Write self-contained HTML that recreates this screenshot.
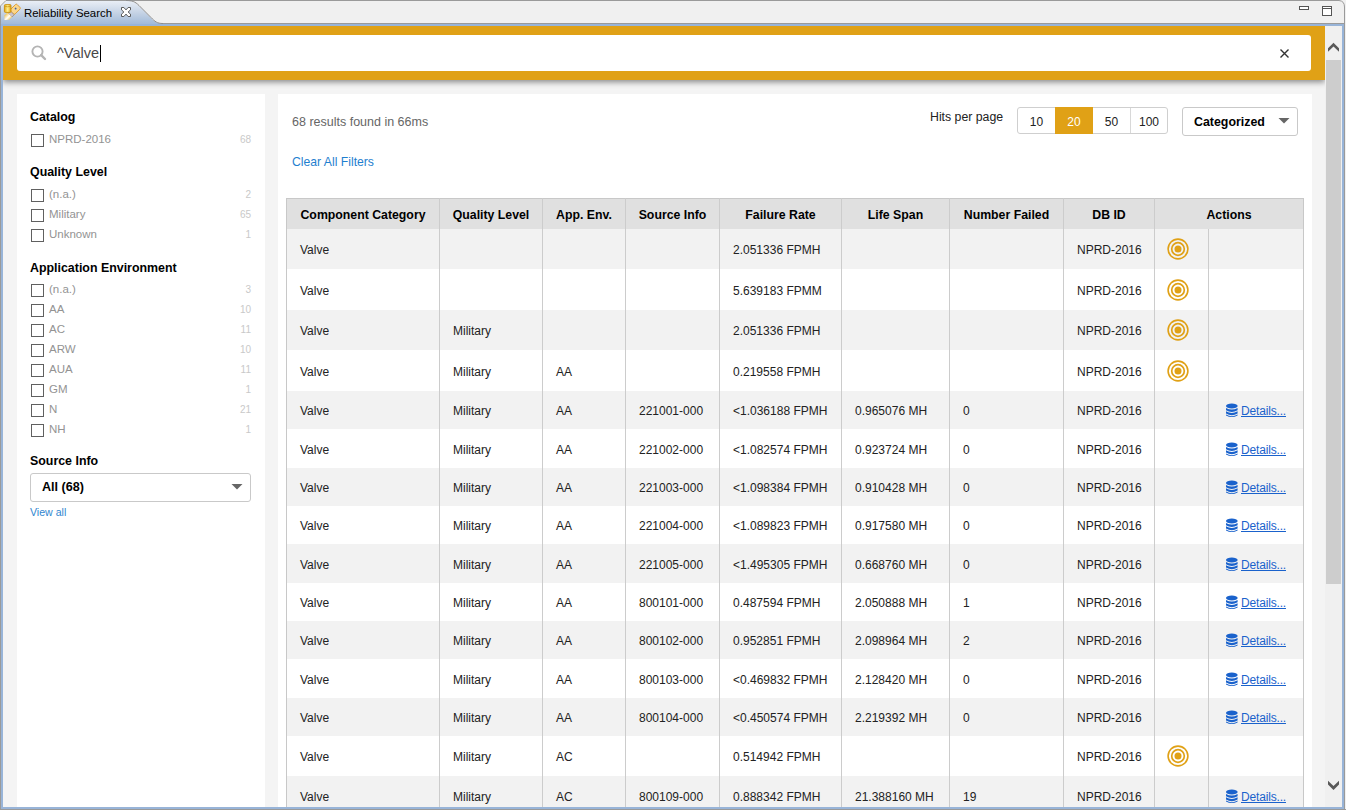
<!DOCTYPE html>
<html><head><meta charset="utf-8"><title>Reliability Search</title>
<style>
html,body{margin:0;padding:0;width:1346px;height:810px;overflow:hidden;background:#f0f0f0;}
body{position:relative;font-family:"Liberation Sans", sans-serif;}
.r{position:absolute;}
.t{position:absolute;white-space:nowrap;}
</style></head><body>
<div class="r" style="left:0px;top:0px;width:1346px;height:810px;background:#f0f0f0;"></div>
<svg class="r" style="left:0;top:0" width="1346" height="27" viewBox="0 0 1346 27">
<defs><linearGradient id="tg" x1="0" y1="0" x2="0" y2="1">
<stop offset="0" stop-color="#e9eef6"/><stop offset="0.5" stop-color="#c3d1e4"/><stop offset="1" stop-color="#9bb6d7"/></linearGradient></defs>
<rect x="0" y="0" width="1346" height="27" fill="#f0f0f0"/>
<path d="M0.5,26 L0.5,6 L6,0.5 L1339,0.5 Q1344.5,1 1344.5,7 L1344.5,27" fill="none" stroke="#9a9a9a" stroke-width="1"/>
<path d="M1345.5,27 L1345.5,0" stroke="#f0f0f0" stroke-width="1"/>
<path d="M162,23.5 L1344.5,23.5" stroke="#9a9a9a" stroke-width="1"/>
<path d="M1,26 L1,6.5 L6.5,1 L127,1 C132,1 135,2 139,6 L151,18 C155,22 157,23.5 163,23.5 L163,24 L1,24 Z" fill="url(#tg)"/>
<path d="M126,0.5 C132,0.5 135,1.5 139,5.5 L151,17.5 C155,21.5 157,23.5 163,23.5" fill="none" stroke="#8d8d8d" stroke-width="1"/>
<rect x="1" y="24" width="1343" height="2" fill="#98b4d8"/>
</svg>
<svg class="r" style="left:0;top:0" width="24" height="24" viewBox="0 0 24 24">
<defs>
<linearGradient id="cyl" x1="0" y1="0" x2="1" y2="0"><stop offset="0" stop-color="#e3a814"/><stop offset="0.5" stop-color="#fff08a"/><stop offset="1" stop-color="#e0a010"/></linearGradient>
<linearGradient id="tip" x1="0" y1="0" x2="0" y2="1"><stop offset="0" stop-color="#f5c85a"/><stop offset="0.6" stop-color="#ffffff"/><stop offset="1" stop-color="#f3cf6a"/></linearGradient>
</defs>
<g transform="translate(12.3 12.2) rotate(-45)">
<rect x="-0.5" y="-3.2" width="9.3" height="6.4" rx="1.3" fill="#fbd68a" stroke="#db9a2e" stroke-width="0.9"/>
<circle cx="4.9" cy="-0.2" r="0.95" fill="#3d62a6"/>
<rect x="-3.6" y="-3.2" width="3.1" height="6.4" fill="#cbc3cb" stroke="#9a8060" stroke-width="0.6"/>
<path d="M-3.6,-3.2 L-7.6,-3.2 L-11.2,0 L-7.6,3.2 L-3.6,3.2 Z" fill="url(#tip)"/>
</g>
<rect x="4.4" y="4.6" width="6.6" height="7.8" rx="1" fill="url(#cyl)" stroke="#c98f0c" stroke-width="0.9"/>
<path d="M4.6,6.2 Q7.7,7.4 10.8,6.2" fill="none" stroke="#c98f0c" stroke-width="0.7"/>
</svg>
<div class="t" style="left:24px;top:5.75px;font-size:11.4px;line-height:15px;color:#000;">Reliability Search</div>
<svg class="r" style="left:121px;top:7px" width="10" height="10" viewBox="0 0 10 10">
<path d="M0.5,0.5 H2.9 L5,2.9 L7.1,0.5 H9.5 V2.9 L7.1,5 L9.5,7.1 V9.5 H7.1 L5,7.1 L2.9,9.5 H0.5 V7.1 L2.9,5 L0.5,2.9 Z" fill="#fff" stroke="#5a5a5a" stroke-width="1" stroke-linejoin="miter"/>
</svg>
<svg class="r" style="left:1296px;top:3px" width="40" height="16" viewBox="0 0 40 16">
<rect x="3.5" y="3.5" width="9" height="3" fill="#fff" stroke="#555" stroke-width="1"/>
<rect x="26.5" y="3.5" width="9" height="9" fill="#fff" stroke="#555" stroke-width="1"/>
<path d="M26.5,5.5 L35.5,5.5" stroke="#555" stroke-width="1"/>
</svg>
<div class="r" style="left:3px;top:26px;width:1339px;height:781px;background:#f4f4f4;"></div>
<div class="r" style="left:17px;top:94px;width:248px;height:713px;background:#ffffff;"></div>
<div class="r" style="left:278px;top:94px;width:1034px;height:713px;background:#ffffff;"></div>
<div class="r" style="left:1325px;top:26px;width:17px;height:781px;background:#f0f0f0;"></div>
<div class="r" style="left:1326px;top:60px;width:15px;height:524px;background:#cdcdcd;"></div>
<svg class="r" style="left:1325px;top:26px" width="17" height="781" viewBox="0 0 17 781">
<path d="M3,22.3 L8.5,16.8 L14,22.3 L14,25.8 L8.5,20.6 L3,25.8 Z" fill="#595959"/>
<path d="M3,754.7 L8.5,760.1 L14,754.7 L14,758.6 L8.5,763.9 L3,758.6 Z" fill="#595959"/>
</svg>
<div class="r" style="left:3px;top:26px;width:1322px;height:781px;overflow:hidden"><div class="r" style="left:0;top:0;width:1322px;height:54px;background:#e0a116;box-shadow:0 2px 6px rgba(0,0,0,0.46);"></div></div>
<div class="r" style="left:17px;top:35px;width:1294px;height:36px;background:#ffffff;border-radius:3px;"></div>
<svg class="r" style="left:28px;top:42px" width="22" height="22" viewBox="0 0 22 22">
<circle cx="9.5" cy="9.5" r="5.1" fill="none" stroke="#b4b4b4" stroke-width="1.9"/>
<path d="M13.2,13.2 L17,17" stroke="#b4b4b4" stroke-width="2.4" stroke-linecap="round"/>
</svg>
<div class="t" style="left:57px;top:43.98px;font-size:14.5px;line-height:19px;color:#484848;">^Valve</div>
<div class="r" style="left:100px;top:45px;width:1px;height:17px;background:#000;"></div>
<svg class="r" style="left:1276px;top:45px" width="17" height="17" viewBox="0 0 17 17">
<path d="M4.5,4.5 L12.5,12.5 M12.5,4.5 L4.5,12.5" stroke="#333" stroke-width="1.4"/>
</svg>
<div class="t" style="left:30px;top:108.70px;font-size:12.4px;line-height:16px;color:#000;font-weight:bold;">Catalog</div>
<div class="r" style="left:31px;top:134px;width:13px;height:13px;background:#fff;box-sizing:border-box;border:1px solid #606060;"></div>
<div class="t" style="left:49px;top:132.12px;font-size:11.5px;line-height:15px;color:#939393;">NPRD-2016</div>
<div class="t" style="right:1095px;top:133.03px;font-size:10px;line-height:13px;color:#c9c9c9;">68</div>
<div class="t" style="left:30px;top:163.70px;font-size:12.4px;line-height:16px;color:#000;font-weight:bold;">Quality Level</div>
<div class="r" style="left:31px;top:189px;width:13px;height:13px;background:#fff;box-sizing:border-box;border:1px solid #606060;"></div>
<div class="t" style="left:49px;top:187.12px;font-size:11.5px;line-height:15px;color:#939393;">(n.a.)</div>
<div class="t" style="right:1095px;top:188.03px;font-size:10px;line-height:13px;color:#c9c9c9;">2</div>
<div class="r" style="left:31px;top:209px;width:13px;height:13px;background:#fff;box-sizing:border-box;border:1px solid #606060;"></div>
<div class="t" style="left:49px;top:207.12px;font-size:11.5px;line-height:15px;color:#939393;">Military</div>
<div class="t" style="right:1095px;top:208.03px;font-size:10px;line-height:13px;color:#c9c9c9;">65</div>
<div class="r" style="left:31px;top:229px;width:13px;height:13px;background:#fff;box-sizing:border-box;border:1px solid #606060;"></div>
<div class="t" style="left:49px;top:227.12px;font-size:11.5px;line-height:15px;color:#939393;">Unknown</div>
<div class="t" style="right:1095px;top:228.03px;font-size:10px;line-height:13px;color:#c9c9c9;">1</div>
<div class="t" style="left:30px;top:259.50px;font-size:12.4px;line-height:16px;color:#000;font-weight:bold;">Application Environment</div>
<div class="r" style="left:31px;top:284px;width:13px;height:13px;background:#fff;box-sizing:border-box;border:1px solid #606060;"></div>
<div class="t" style="left:49px;top:282.12px;font-size:11.5px;line-height:15px;color:#939393;">(n.a.)</div>
<div class="t" style="right:1095px;top:283.04px;font-size:10px;line-height:13px;color:#c9c9c9;">3</div>
<div class="r" style="left:31px;top:304px;width:13px;height:13px;background:#fff;box-sizing:border-box;border:1px solid #606060;"></div>
<div class="t" style="left:49px;top:302.12px;font-size:11.5px;line-height:15px;color:#939393;">AA</div>
<div class="t" style="right:1095px;top:303.04px;font-size:10px;line-height:13px;color:#c9c9c9;">10</div>
<div class="r" style="left:31px;top:324px;width:13px;height:13px;background:#fff;box-sizing:border-box;border:1px solid #606060;"></div>
<div class="t" style="left:49px;top:322.12px;font-size:11.5px;line-height:15px;color:#939393;">AC</div>
<div class="t" style="right:1095px;top:323.04px;font-size:10px;line-height:13px;color:#c9c9c9;">11</div>
<div class="r" style="left:31px;top:344px;width:13px;height:13px;background:#fff;box-sizing:border-box;border:1px solid #606060;"></div>
<div class="t" style="left:49px;top:342.12px;font-size:11.5px;line-height:15px;color:#939393;">ARW</div>
<div class="t" style="right:1095px;top:343.04px;font-size:10px;line-height:13px;color:#c9c9c9;">10</div>
<div class="r" style="left:31px;top:364px;width:13px;height:13px;background:#fff;box-sizing:border-box;border:1px solid #606060;"></div>
<div class="t" style="left:49px;top:362.12px;font-size:11.5px;line-height:15px;color:#939393;">AUA</div>
<div class="t" style="right:1095px;top:363.04px;font-size:10px;line-height:13px;color:#c9c9c9;">11</div>
<div class="r" style="left:31px;top:384px;width:13px;height:13px;background:#fff;box-sizing:border-box;border:1px solid #606060;"></div>
<div class="t" style="left:49px;top:382.12px;font-size:11.5px;line-height:15px;color:#939393;">GM</div>
<div class="t" style="right:1095px;top:383.04px;font-size:10px;line-height:13px;color:#c9c9c9;">1</div>
<div class="r" style="left:31px;top:404px;width:13px;height:13px;background:#fff;box-sizing:border-box;border:1px solid #606060;"></div>
<div class="t" style="left:49px;top:402.12px;font-size:11.5px;line-height:15px;color:#939393;">N</div>
<div class="t" style="right:1095px;top:403.04px;font-size:10px;line-height:13px;color:#c9c9c9;">21</div>
<div class="r" style="left:31px;top:424px;width:13px;height:13px;background:#fff;box-sizing:border-box;border:1px solid #606060;"></div>
<div class="t" style="left:49px;top:422.12px;font-size:11.5px;line-height:15px;color:#939393;">NH</div>
<div class="t" style="right:1095px;top:423.04px;font-size:10px;line-height:13px;color:#c9c9c9;">1</div>
<div class="t" style="left:30px;top:452.90px;font-size:12.4px;line-height:16px;color:#000;font-weight:bold;">Source Info</div>
<div class="r" style="left:30px;top:473px;width:221px;height:29px;background:#fff;box-sizing:border-box;border:1px solid #c9c9c9;border-radius:3px;"></div>
<div class="t" style="left:42px;top:478.63px;font-size:12.6px;line-height:16px;color:#000;font-weight:bold;">All (68)</div>
<svg class="r" style="left:231px;top:483px" width="12" height="8" viewBox="0 0 12 8">
<path d="M0.5,1 L11.5,1 L6,6.5 Z" fill="#666"/></svg>
<div class="t" style="left:30px;top:505.33px;font-size:10.6px;line-height:14px;color:#2f86cf;">View all</div>
<div class="t" style="left:292px;top:113.97px;font-size:12.5px;line-height:16px;color:#666666;">68 results found in 66ms</div>
<div class="t" style="left:292px;top:153.87px;font-size:12.2px;line-height:16px;color:#1f7fcf;">Clear All Filters</div>
<div class="t" style="left:930px;top:108.74px;font-size:12.3px;line-height:16px;color:#222;">Hits per page</div>
<div class="r" style="left:1017px;top:107px;width:151px;height:27px;background:#fff;box-sizing:border-box;border:1px solid #cfcfcf;border-radius:3px;"></div>
<div class="r" style="left:1055px;top:107px;width:38px;height:27px;background:#e0a116;"></div>
<div class="r" style="left:1130px;top:108px;width:1px;height:25px;background:#d8d8d8;"></div>
<div class="t" style="left:1017.5px;width:38px;text-align:center;top:113.54px;font-size:12px;line-height:16px;color:#222;">10</div>
<div class="t" style="left:1055.0px;width:38px;text-align:center;top:113.54px;font-size:12px;line-height:16px;color:#fff;">20</div>
<div class="t" style="left:1092.5px;width:38px;text-align:center;top:113.54px;font-size:12px;line-height:16px;color:#222;">50</div>
<div class="t" style="left:1130.0px;width:38px;text-align:center;top:113.54px;font-size:12px;line-height:16px;color:#222;">100</div>
<div class="r" style="left:1182px;top:107px;width:116px;height:29px;background:#fff;box-sizing:border-box;border:1px solid #c9c9c9;border-radius:3px;"></div>
<div class="t" style="left:1194px;top:113.70px;font-size:12.4px;line-height:16px;color:#000;font-weight:bold;">Categorized</div>
<svg class="r" style="left:1278px;top:117px" width="12" height="8" viewBox="0 0 12 8">
<path d="M0.5,1 L11.5,1 L6,6.5 Z" fill="#666"/></svg>
<div class="r" style="left:0;top:0;width:1346px;height:807px;overflow:hidden">
<div class="r" style="left:286px;top:198px;width:1018px;height:31px;background:#e0e0e0;"></div>
<div class="r" style="left:286px;top:198px;width:1018px;height:1px;background:#c8c8c8;"></div>
<div class="t" style="left:286.5px;width:153px;text-align:center;top:207.14px;font-size:12.3px;line-height:16px;color:#000;font-weight:bold;">Component Category</div>
<div class="t" style="left:439.5px;width:103px;text-align:center;top:207.14px;font-size:12.3px;line-height:16px;color:#000;font-weight:bold;">Quality Level</div>
<div class="t" style="left:542.5px;width:83px;text-align:center;top:207.14px;font-size:12.3px;line-height:16px;color:#000;font-weight:bold;">App. Env.</div>
<div class="t" style="left:625.5px;width:94px;text-align:center;top:207.14px;font-size:12.3px;line-height:16px;color:#000;font-weight:bold;">Source Info</div>
<div class="t" style="left:719.5px;width:122px;text-align:center;top:207.14px;font-size:12.3px;line-height:16px;color:#000;font-weight:bold;">Failure Rate</div>
<div class="t" style="left:841.5px;width:108px;text-align:center;top:207.14px;font-size:12.3px;line-height:16px;color:#000;font-weight:bold;">Life Span</div>
<div class="t" style="left:949.5px;width:114px;text-align:center;top:207.14px;font-size:12.3px;line-height:16px;color:#000;font-weight:bold;">Number Failed</div>
<div class="t" style="left:1063.5px;width:91px;text-align:center;top:207.14px;font-size:12.3px;line-height:16px;color:#000;font-weight:bold;">DB ID</div>
<div class="t" style="left:1154.5px;width:149px;text-align:center;top:207.14px;font-size:12.3px;line-height:16px;color:#000;font-weight:bold;">Actions</div>
<div class="r" style="left:287px;top:229px;width:1016px;height:40px;background:#f2f2f2;"></div>
<div class="t" style="left:300px;top:242.34px;font-size:12px;line-height:16px;color:#222;">Valve</div>
<div class="t" style="left:733px;top:242.34px;font-size:12px;line-height:16px;color:#222;">2.051336 FPMH</div>
<div class="t" style="left:1077px;top:242.34px;font-size:12px;line-height:16px;color:#222;">NPRD-2016</div>
<svg class="r" style="left:1166px;top:237.0px" width="24" height="24" viewBox="0 0 24 24">
<circle cx="12" cy="12" r="9.9" fill="none" stroke="#e0a116" stroke-width="1.6"/>
<circle cx="12" cy="12" r="6.3" fill="none" stroke="#e0a116" stroke-width="1.7"/>
<circle cx="12" cy="12" r="3.5" fill="#e0a116"/></svg>
<div class="r" style="left:287px;top:269px;width:1016px;height:41px;background:#ffffff;"></div>
<div class="t" style="left:300px;top:282.84px;font-size:12px;line-height:16px;color:#222;">Valve</div>
<div class="t" style="left:733px;top:282.84px;font-size:12px;line-height:16px;color:#222;">5.639183 FPMM</div>
<div class="t" style="left:1077px;top:282.84px;font-size:12px;line-height:16px;color:#222;">NPRD-2016</div>
<svg class="r" style="left:1166px;top:277.5px" width="24" height="24" viewBox="0 0 24 24">
<circle cx="12" cy="12" r="9.9" fill="none" stroke="#e0a116" stroke-width="1.6"/>
<circle cx="12" cy="12" r="6.3" fill="none" stroke="#e0a116" stroke-width="1.7"/>
<circle cx="12" cy="12" r="3.5" fill="#e0a116"/></svg>
<div class="r" style="left:287px;top:310px;width:1016px;height:40px;background:#f2f2f2;"></div>
<div class="t" style="left:300px;top:323.34px;font-size:12px;line-height:16px;color:#222;">Valve</div>
<div class="t" style="left:453px;top:323.34px;font-size:12px;line-height:16px;color:#222;">Military</div>
<div class="t" style="left:733px;top:323.34px;font-size:12px;line-height:16px;color:#222;">2.051336 FPMH</div>
<div class="t" style="left:1077px;top:323.34px;font-size:12px;line-height:16px;color:#222;">NPRD-2016</div>
<svg class="r" style="left:1166px;top:318.0px" width="24" height="24" viewBox="0 0 24 24">
<circle cx="12" cy="12" r="9.9" fill="none" stroke="#e0a116" stroke-width="1.6"/>
<circle cx="12" cy="12" r="6.3" fill="none" stroke="#e0a116" stroke-width="1.7"/>
<circle cx="12" cy="12" r="3.5" fill="#e0a116"/></svg>
<div class="r" style="left:287px;top:350px;width:1016px;height:41px;background:#ffffff;"></div>
<div class="t" style="left:300px;top:363.84px;font-size:12px;line-height:16px;color:#222;">Valve</div>
<div class="t" style="left:453px;top:363.84px;font-size:12px;line-height:16px;color:#222;">Military</div>
<div class="t" style="left:556px;top:363.84px;font-size:12px;line-height:16px;color:#222;">AA</div>
<div class="t" style="left:733px;top:363.84px;font-size:12px;line-height:16px;color:#222;">0.219558 FPMH</div>
<div class="t" style="left:1077px;top:363.84px;font-size:12px;line-height:16px;color:#222;">NPRD-2016</div>
<svg class="r" style="left:1166px;top:358.5px" width="24" height="24" viewBox="0 0 24 24">
<circle cx="12" cy="12" r="9.9" fill="none" stroke="#e0a116" stroke-width="1.6"/>
<circle cx="12" cy="12" r="6.3" fill="none" stroke="#e0a116" stroke-width="1.7"/>
<circle cx="12" cy="12" r="3.5" fill="#e0a116"/></svg>
<div class="r" style="left:287px;top:391px;width:1016px;height:38px;background:#f2f2f2;"></div>
<div class="t" style="left:300px;top:403.34px;font-size:12px;line-height:16px;color:#222;">Valve</div>
<div class="t" style="left:453px;top:403.34px;font-size:12px;line-height:16px;color:#222;">Military</div>
<div class="t" style="left:556px;top:403.34px;font-size:12px;line-height:16px;color:#222;">AA</div>
<div class="t" style="left:639px;top:403.34px;font-size:12px;line-height:16px;color:#222;">221001-000</div>
<div class="t" style="left:733px;top:403.34px;font-size:12px;line-height:16px;color:#222;">&lt;1.036188 FPMH</div>
<div class="t" style="left:855px;top:403.34px;font-size:12px;line-height:16px;color:#222;">0.965076 MH</div>
<div class="t" style="left:963px;top:403.34px;font-size:12px;line-height:16px;color:#222;">0</div>
<div class="t" style="left:1077px;top:403.34px;font-size:12px;line-height:16px;color:#222;">NPRD-2016</div>
<svg class="r" style="left:1225px;top:403.0px" width="14" height="15" viewBox="0 0 14 15">
<ellipse cx="6.8" cy="3" rx="5.8" ry="2.4" fill="#1a62cc"/>
<path d="M1,5 Q6.8,8.2 12.6,5 L12.6,7.3 Q6.8,10.5 1,7.3 Z" fill="#1a62cc"/>
<path d="M1,8.3 Q6.8,11.5 12.6,8.3 L12.6,10.6 Q6.8,13.8 1,10.6 Z" fill="#1a62cc"/>
<path d="M1,11.6 Q6.8,14.8 12.6,11.6 L12.6,12.4 Q6.8,15.4 1,12.4 Z" fill="#1a62cc"/>
</svg>
<div class="t" style="left:1241px;top:403.04px;font-size:12px;line-height:16px;color:#1a62cc;text-decoration:underline;letter-spacing:-0.17px;">Details...</div>
<div class="r" style="left:287px;top:429px;width:1016px;height:39px;background:#ffffff;"></div>
<div class="t" style="left:300px;top:441.84px;font-size:12px;line-height:16px;color:#222;">Valve</div>
<div class="t" style="left:453px;top:441.84px;font-size:12px;line-height:16px;color:#222;">Military</div>
<div class="t" style="left:556px;top:441.84px;font-size:12px;line-height:16px;color:#222;">AA</div>
<div class="t" style="left:639px;top:441.84px;font-size:12px;line-height:16px;color:#222;">221002-000</div>
<div class="t" style="left:733px;top:441.84px;font-size:12px;line-height:16px;color:#222;">&lt;1.082574 FPMH</div>
<div class="t" style="left:855px;top:441.84px;font-size:12px;line-height:16px;color:#222;">0.923724 MH</div>
<div class="t" style="left:963px;top:441.84px;font-size:12px;line-height:16px;color:#222;">0</div>
<div class="t" style="left:1077px;top:441.84px;font-size:12px;line-height:16px;color:#222;">NPRD-2016</div>
<svg class="r" style="left:1225px;top:441.5px" width="14" height="15" viewBox="0 0 14 15">
<ellipse cx="6.8" cy="3" rx="5.8" ry="2.4" fill="#1a62cc"/>
<path d="M1,5 Q6.8,8.2 12.6,5 L12.6,7.3 Q6.8,10.5 1,7.3 Z" fill="#1a62cc"/>
<path d="M1,8.3 Q6.8,11.5 12.6,8.3 L12.6,10.6 Q6.8,13.8 1,10.6 Z" fill="#1a62cc"/>
<path d="M1,11.6 Q6.8,14.8 12.6,11.6 L12.6,12.4 Q6.8,15.4 1,12.4 Z" fill="#1a62cc"/>
</svg>
<div class="t" style="left:1241px;top:441.54px;font-size:12px;line-height:16px;color:#1a62cc;text-decoration:underline;letter-spacing:-0.17px;">Details...</div>
<div class="r" style="left:287px;top:468px;width:1016px;height:38px;background:#f2f2f2;"></div>
<div class="t" style="left:300px;top:480.34px;font-size:12px;line-height:16px;color:#222;">Valve</div>
<div class="t" style="left:453px;top:480.34px;font-size:12px;line-height:16px;color:#222;">Military</div>
<div class="t" style="left:556px;top:480.34px;font-size:12px;line-height:16px;color:#222;">AA</div>
<div class="t" style="left:639px;top:480.34px;font-size:12px;line-height:16px;color:#222;">221003-000</div>
<div class="t" style="left:733px;top:480.34px;font-size:12px;line-height:16px;color:#222;">&lt;1.098384 FPMH</div>
<div class="t" style="left:855px;top:480.34px;font-size:12px;line-height:16px;color:#222;">0.910428 MH</div>
<div class="t" style="left:963px;top:480.34px;font-size:12px;line-height:16px;color:#222;">0</div>
<div class="t" style="left:1077px;top:480.34px;font-size:12px;line-height:16px;color:#222;">NPRD-2016</div>
<svg class="r" style="left:1225px;top:480.0px" width="14" height="15" viewBox="0 0 14 15">
<ellipse cx="6.8" cy="3" rx="5.8" ry="2.4" fill="#1a62cc"/>
<path d="M1,5 Q6.8,8.2 12.6,5 L12.6,7.3 Q6.8,10.5 1,7.3 Z" fill="#1a62cc"/>
<path d="M1,8.3 Q6.8,11.5 12.6,8.3 L12.6,10.6 Q6.8,13.8 1,10.6 Z" fill="#1a62cc"/>
<path d="M1,11.6 Q6.8,14.8 12.6,11.6 L12.6,12.4 Q6.8,15.4 1,12.4 Z" fill="#1a62cc"/>
</svg>
<div class="t" style="left:1241px;top:480.04px;font-size:12px;line-height:16px;color:#1a62cc;text-decoration:underline;letter-spacing:-0.17px;">Details...</div>
<div class="r" style="left:287px;top:506px;width:1016px;height:38px;background:#ffffff;"></div>
<div class="t" style="left:300px;top:518.34px;font-size:12px;line-height:16px;color:#222;">Valve</div>
<div class="t" style="left:453px;top:518.34px;font-size:12px;line-height:16px;color:#222;">Military</div>
<div class="t" style="left:556px;top:518.34px;font-size:12px;line-height:16px;color:#222;">AA</div>
<div class="t" style="left:639px;top:518.34px;font-size:12px;line-height:16px;color:#222;">221004-000</div>
<div class="t" style="left:733px;top:518.34px;font-size:12px;line-height:16px;color:#222;">&lt;1.089823 FPMH</div>
<div class="t" style="left:855px;top:518.34px;font-size:12px;line-height:16px;color:#222;">0.917580 MH</div>
<div class="t" style="left:963px;top:518.34px;font-size:12px;line-height:16px;color:#222;">0</div>
<div class="t" style="left:1077px;top:518.34px;font-size:12px;line-height:16px;color:#222;">NPRD-2016</div>
<svg class="r" style="left:1225px;top:518.0px" width="14" height="15" viewBox="0 0 14 15">
<ellipse cx="6.8" cy="3" rx="5.8" ry="2.4" fill="#1a62cc"/>
<path d="M1,5 Q6.8,8.2 12.6,5 L12.6,7.3 Q6.8,10.5 1,7.3 Z" fill="#1a62cc"/>
<path d="M1,8.3 Q6.8,11.5 12.6,8.3 L12.6,10.6 Q6.8,13.8 1,10.6 Z" fill="#1a62cc"/>
<path d="M1,11.6 Q6.8,14.8 12.6,11.6 L12.6,12.4 Q6.8,15.4 1,12.4 Z" fill="#1a62cc"/>
</svg>
<div class="t" style="left:1241px;top:518.04px;font-size:12px;line-height:16px;color:#1a62cc;text-decoration:underline;letter-spacing:-0.17px;">Details...</div>
<div class="r" style="left:287px;top:544px;width:1016px;height:39px;background:#f2f2f2;"></div>
<div class="t" style="left:300px;top:556.84px;font-size:12px;line-height:16px;color:#222;">Valve</div>
<div class="t" style="left:453px;top:556.84px;font-size:12px;line-height:16px;color:#222;">Military</div>
<div class="t" style="left:556px;top:556.84px;font-size:12px;line-height:16px;color:#222;">AA</div>
<div class="t" style="left:639px;top:556.84px;font-size:12px;line-height:16px;color:#222;">221005-000</div>
<div class="t" style="left:733px;top:556.84px;font-size:12px;line-height:16px;color:#222;">&lt;1.495305 FPMH</div>
<div class="t" style="left:855px;top:556.84px;font-size:12px;line-height:16px;color:#222;">0.668760 MH</div>
<div class="t" style="left:963px;top:556.84px;font-size:12px;line-height:16px;color:#222;">0</div>
<div class="t" style="left:1077px;top:556.84px;font-size:12px;line-height:16px;color:#222;">NPRD-2016</div>
<svg class="r" style="left:1225px;top:556.5px" width="14" height="15" viewBox="0 0 14 15">
<ellipse cx="6.8" cy="3" rx="5.8" ry="2.4" fill="#1a62cc"/>
<path d="M1,5 Q6.8,8.2 12.6,5 L12.6,7.3 Q6.8,10.5 1,7.3 Z" fill="#1a62cc"/>
<path d="M1,8.3 Q6.8,11.5 12.6,8.3 L12.6,10.6 Q6.8,13.8 1,10.6 Z" fill="#1a62cc"/>
<path d="M1,11.6 Q6.8,14.8 12.6,11.6 L12.6,12.4 Q6.8,15.4 1,12.4 Z" fill="#1a62cc"/>
</svg>
<div class="t" style="left:1241px;top:556.54px;font-size:12px;line-height:16px;color:#1a62cc;text-decoration:underline;letter-spacing:-0.17px;">Details...</div>
<div class="r" style="left:287px;top:583px;width:1016px;height:38px;background:#ffffff;"></div>
<div class="t" style="left:300px;top:595.34px;font-size:12px;line-height:16px;color:#222;">Valve</div>
<div class="t" style="left:453px;top:595.34px;font-size:12px;line-height:16px;color:#222;">Military</div>
<div class="t" style="left:556px;top:595.34px;font-size:12px;line-height:16px;color:#222;">AA</div>
<div class="t" style="left:639px;top:595.34px;font-size:12px;line-height:16px;color:#222;">800101-000</div>
<div class="t" style="left:733px;top:595.34px;font-size:12px;line-height:16px;color:#222;">0.487594 FPMH</div>
<div class="t" style="left:855px;top:595.34px;font-size:12px;line-height:16px;color:#222;">2.050888 MH</div>
<div class="t" style="left:963px;top:595.34px;font-size:12px;line-height:16px;color:#222;">1</div>
<div class="t" style="left:1077px;top:595.34px;font-size:12px;line-height:16px;color:#222;">NPRD-2016</div>
<svg class="r" style="left:1225px;top:595.0px" width="14" height="15" viewBox="0 0 14 15">
<ellipse cx="6.8" cy="3" rx="5.8" ry="2.4" fill="#1a62cc"/>
<path d="M1,5 Q6.8,8.2 12.6,5 L12.6,7.3 Q6.8,10.5 1,7.3 Z" fill="#1a62cc"/>
<path d="M1,8.3 Q6.8,11.5 12.6,8.3 L12.6,10.6 Q6.8,13.8 1,10.6 Z" fill="#1a62cc"/>
<path d="M1,11.6 Q6.8,14.8 12.6,11.6 L12.6,12.4 Q6.8,15.4 1,12.4 Z" fill="#1a62cc"/>
</svg>
<div class="t" style="left:1241px;top:595.04px;font-size:12px;line-height:16px;color:#1a62cc;text-decoration:underline;letter-spacing:-0.17px;">Details...</div>
<div class="r" style="left:287px;top:621px;width:1016px;height:38px;background:#f2f2f2;"></div>
<div class="t" style="left:300px;top:633.34px;font-size:12px;line-height:16px;color:#222;">Valve</div>
<div class="t" style="left:453px;top:633.34px;font-size:12px;line-height:16px;color:#222;">Military</div>
<div class="t" style="left:556px;top:633.34px;font-size:12px;line-height:16px;color:#222;">AA</div>
<div class="t" style="left:639px;top:633.34px;font-size:12px;line-height:16px;color:#222;">800102-000</div>
<div class="t" style="left:733px;top:633.34px;font-size:12px;line-height:16px;color:#222;">0.952851 FPMH</div>
<div class="t" style="left:855px;top:633.34px;font-size:12px;line-height:16px;color:#222;">2.098964 MH</div>
<div class="t" style="left:963px;top:633.34px;font-size:12px;line-height:16px;color:#222;">2</div>
<div class="t" style="left:1077px;top:633.34px;font-size:12px;line-height:16px;color:#222;">NPRD-2016</div>
<svg class="r" style="left:1225px;top:633.0px" width="14" height="15" viewBox="0 0 14 15">
<ellipse cx="6.8" cy="3" rx="5.8" ry="2.4" fill="#1a62cc"/>
<path d="M1,5 Q6.8,8.2 12.6,5 L12.6,7.3 Q6.8,10.5 1,7.3 Z" fill="#1a62cc"/>
<path d="M1,8.3 Q6.8,11.5 12.6,8.3 L12.6,10.6 Q6.8,13.8 1,10.6 Z" fill="#1a62cc"/>
<path d="M1,11.6 Q6.8,14.8 12.6,11.6 L12.6,12.4 Q6.8,15.4 1,12.4 Z" fill="#1a62cc"/>
</svg>
<div class="t" style="left:1241px;top:633.04px;font-size:12px;line-height:16px;color:#1a62cc;text-decoration:underline;letter-spacing:-0.17px;">Details...</div>
<div class="r" style="left:287px;top:659px;width:1016px;height:39px;background:#ffffff;"></div>
<div class="t" style="left:300px;top:671.84px;font-size:12px;line-height:16px;color:#222;">Valve</div>
<div class="t" style="left:453px;top:671.84px;font-size:12px;line-height:16px;color:#222;">Military</div>
<div class="t" style="left:556px;top:671.84px;font-size:12px;line-height:16px;color:#222;">AA</div>
<div class="t" style="left:639px;top:671.84px;font-size:12px;line-height:16px;color:#222;">800103-000</div>
<div class="t" style="left:733px;top:671.84px;font-size:12px;line-height:16px;color:#222;">&lt;0.469832 FPMH</div>
<div class="t" style="left:855px;top:671.84px;font-size:12px;line-height:16px;color:#222;">2.128420 MH</div>
<div class="t" style="left:963px;top:671.84px;font-size:12px;line-height:16px;color:#222;">0</div>
<div class="t" style="left:1077px;top:671.84px;font-size:12px;line-height:16px;color:#222;">NPRD-2016</div>
<svg class="r" style="left:1225px;top:671.5px" width="14" height="15" viewBox="0 0 14 15">
<ellipse cx="6.8" cy="3" rx="5.8" ry="2.4" fill="#1a62cc"/>
<path d="M1,5 Q6.8,8.2 12.6,5 L12.6,7.3 Q6.8,10.5 1,7.3 Z" fill="#1a62cc"/>
<path d="M1,8.3 Q6.8,11.5 12.6,8.3 L12.6,10.6 Q6.8,13.8 1,10.6 Z" fill="#1a62cc"/>
<path d="M1,11.6 Q6.8,14.8 12.6,11.6 L12.6,12.4 Q6.8,15.4 1,12.4 Z" fill="#1a62cc"/>
</svg>
<div class="t" style="left:1241px;top:671.54px;font-size:12px;line-height:16px;color:#1a62cc;text-decoration:underline;letter-spacing:-0.17px;">Details...</div>
<div class="r" style="left:287px;top:698px;width:1016px;height:38px;background:#f2f2f2;"></div>
<div class="t" style="left:300px;top:710.34px;font-size:12px;line-height:16px;color:#222;">Valve</div>
<div class="t" style="left:453px;top:710.34px;font-size:12px;line-height:16px;color:#222;">Military</div>
<div class="t" style="left:556px;top:710.34px;font-size:12px;line-height:16px;color:#222;">AA</div>
<div class="t" style="left:639px;top:710.34px;font-size:12px;line-height:16px;color:#222;">800104-000</div>
<div class="t" style="left:733px;top:710.34px;font-size:12px;line-height:16px;color:#222;">&lt;0.450574 FPMH</div>
<div class="t" style="left:855px;top:710.34px;font-size:12px;line-height:16px;color:#222;">2.219392 MH</div>
<div class="t" style="left:963px;top:710.34px;font-size:12px;line-height:16px;color:#222;">0</div>
<div class="t" style="left:1077px;top:710.34px;font-size:12px;line-height:16px;color:#222;">NPRD-2016</div>
<svg class="r" style="left:1225px;top:710.0px" width="14" height="15" viewBox="0 0 14 15">
<ellipse cx="6.8" cy="3" rx="5.8" ry="2.4" fill="#1a62cc"/>
<path d="M1,5 Q6.8,8.2 12.6,5 L12.6,7.3 Q6.8,10.5 1,7.3 Z" fill="#1a62cc"/>
<path d="M1,8.3 Q6.8,11.5 12.6,8.3 L12.6,10.6 Q6.8,13.8 1,10.6 Z" fill="#1a62cc"/>
<path d="M1,11.6 Q6.8,14.8 12.6,11.6 L12.6,12.4 Q6.8,15.4 1,12.4 Z" fill="#1a62cc"/>
</svg>
<div class="t" style="left:1241px;top:710.04px;font-size:12px;line-height:16px;color:#1a62cc;text-decoration:underline;letter-spacing:-0.17px;">Details...</div>
<div class="r" style="left:287px;top:736px;width:1016px;height:40px;background:#ffffff;"></div>
<div class="t" style="left:300px;top:749.34px;font-size:12px;line-height:16px;color:#222;">Valve</div>
<div class="t" style="left:453px;top:749.34px;font-size:12px;line-height:16px;color:#222;">Military</div>
<div class="t" style="left:556px;top:749.34px;font-size:12px;line-height:16px;color:#222;">AC</div>
<div class="t" style="left:733px;top:749.34px;font-size:12px;line-height:16px;color:#222;">0.514942 FPMH</div>
<div class="t" style="left:1077px;top:749.34px;font-size:12px;line-height:16px;color:#222;">NPRD-2016</div>
<svg class="r" style="left:1166px;top:744.0px" width="24" height="24" viewBox="0 0 24 24">
<circle cx="12" cy="12" r="9.9" fill="none" stroke="#e0a116" stroke-width="1.6"/>
<circle cx="12" cy="12" r="6.3" fill="none" stroke="#e0a116" stroke-width="1.7"/>
<circle cx="12" cy="12" r="3.5" fill="#e0a116"/></svg>
<div class="r" style="left:287px;top:776px;width:1016px;height:39px;background:#f2f2f2;"></div>
<div class="t" style="left:300px;top:788.84px;font-size:12px;line-height:16px;color:#222;">Valve</div>
<div class="t" style="left:453px;top:788.84px;font-size:12px;line-height:16px;color:#222;">Military</div>
<div class="t" style="left:556px;top:788.84px;font-size:12px;line-height:16px;color:#222;">AC</div>
<div class="t" style="left:639px;top:788.84px;font-size:12px;line-height:16px;color:#222;">800109-000</div>
<div class="t" style="left:733px;top:788.84px;font-size:12px;line-height:16px;color:#222;">0.888342 FPMH</div>
<div class="t" style="left:855px;top:788.84px;font-size:12px;line-height:16px;color:#222;">21.388160 MH</div>
<div class="t" style="left:963px;top:788.84px;font-size:12px;line-height:16px;color:#222;">19</div>
<div class="t" style="left:1077px;top:788.84px;font-size:12px;line-height:16px;color:#222;">NPRD-2016</div>
<svg class="r" style="left:1225px;top:788.5px" width="14" height="15" viewBox="0 0 14 15">
<ellipse cx="6.8" cy="3" rx="5.8" ry="2.4" fill="#1a62cc"/>
<path d="M1,5 Q6.8,8.2 12.6,5 L12.6,7.3 Q6.8,10.5 1,7.3 Z" fill="#1a62cc"/>
<path d="M1,8.3 Q6.8,11.5 12.6,8.3 L12.6,10.6 Q6.8,13.8 1,10.6 Z" fill="#1a62cc"/>
<path d="M1,11.6 Q6.8,14.8 12.6,11.6 L12.6,12.4 Q6.8,15.4 1,12.4 Z" fill="#1a62cc"/>
</svg>
<div class="t" style="left:1241px;top:788.54px;font-size:12px;line-height:16px;color:#1a62cc;text-decoration:underline;letter-spacing:-0.17px;">Details...</div>
<div class="r" style="left:286px;top:198px;width:1px;height:617px;background:#c8c8c8;"></div>
<div class="r" style="left:439px;top:198px;width:1px;height:617px;background:#cccccc;"></div>
<div class="r" style="left:542px;top:198px;width:1px;height:617px;background:#cccccc;"></div>
<div class="r" style="left:625px;top:198px;width:1px;height:617px;background:#cccccc;"></div>
<div class="r" style="left:719px;top:198px;width:1px;height:617px;background:#cccccc;"></div>
<div class="r" style="left:841px;top:198px;width:1px;height:617px;background:#cccccc;"></div>
<div class="r" style="left:949px;top:198px;width:1px;height:617px;background:#cccccc;"></div>
<div class="r" style="left:1063px;top:198px;width:1px;height:617px;background:#cccccc;"></div>
<div class="r" style="left:1154px;top:198px;width:1px;height:617px;background:#cccccc;"></div>
<div class="r" style="left:1303px;top:198px;width:1px;height:617px;background:#c8c8c8;"></div>
<div class="r" style="left:1208px;top:229px;width:1px;height:586px;background:#cccccc;"></div>
</div>
<div class="r" style="left:1px;top:26px;width:2px;height:781px;background:#98b4d8;"></div>
<div class="r" style="left:1342px;top:26px;width:2px;height:781px;background:#98b4d8;"></div>
<div class="r" style="left:1px;top:807px;width:1343px;height:2px;background:#98b4d8;"></div>
<div class="r" style="left:0px;top:809px;width:1346px;height:1px;background:#9a9a9a;"></div>
<div class="r" style="left:0px;top:6px;width:1px;height:804px;background:#9a9a9a;"></div>
<div class="r" style="left:1344px;top:7px;width:1px;height:803px;background:#9a9a9a;"></div>
</body></html>
